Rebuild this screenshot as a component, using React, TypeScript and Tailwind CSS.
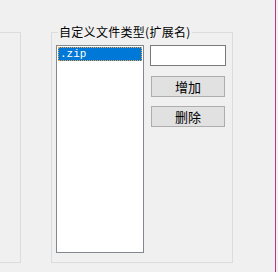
export default function App() {
  return (
    <div
      className="flex h-[272px] w-[278px] overflow-hidden bg-[#f0f0f0] text-[12px] text-black"
      style={{ fontFamily: '"Noto Sans CJK SC", "Liberation Sans", sans-serif' }}
    >
      {/* left groupbox, mostly cut off */}
      <div className="mt-[32px] h-[231px] w-[21px] shrink-0 border border-l-0 border-[#dcdcdc]" />

      {/* right groupbox */}
      <div className="ml-[30px] mt-[32px] flex h-[231px] w-[182px] shrink-0 flex-col border border-[#dcdcdc]">
        <div className="-mt-[8px] flex h-[14px]">
          <span className="ml-[6px] bg-[#f0f0f0] px-[1px] leading-[14px] tracking-[0.3px]">自定义文件类型(扩展名)</span>
        </div>
        <div className="mt-[6px] flex">
          <div className="ml-[4px] h-[208px] w-[88px] border border-[#828790] bg-white p-[1px]">
            <div className="flex h-[14px] items-center border border-dotted border-[#f5a33a] bg-[#0078d7] pl-[1px] font-['Liberation_Mono',monospace] text-[11px] leading-none text-white">
              .zip
            </div>
          </div>
          <div className="ml-[6px] flex flex-col">
            <div className="h-[21px] w-[76px] border border-[#7a7a7a] bg-white" />
            <button className="ml-[1px] mt-[10px] flex h-[21px] w-[74px] items-center justify-center border border-[#adadad] bg-[#e1e1e1] text-[13px] leading-none">
              增加
            </button>
            <button className="ml-[1px] mt-[9px] flex h-[21px] w-[74px] items-center justify-center border border-[#adadad] bg-[#e1e1e1] text-[13px] leading-none">
              删除
            </button>
          </div>
        </div>
      </div>

      <div className="ml-[42px] h-full w-[1px] shrink-0 bg-[#c2338f]" />
    </div>
  );
}
